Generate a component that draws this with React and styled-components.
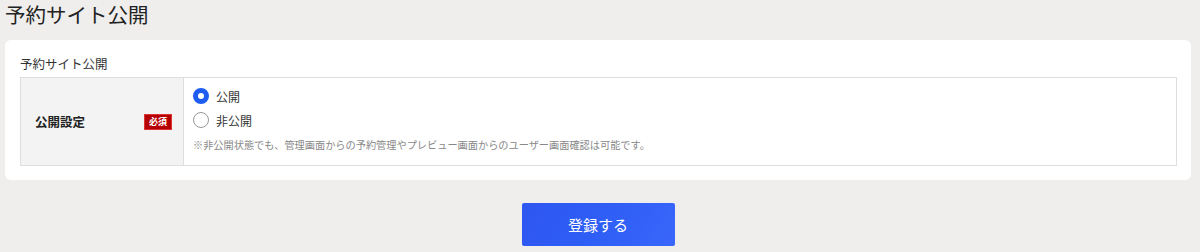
import React from "react";
import styled, { createGlobalStyle } from "styled-components";

const Global = createGlobalStyle`
  html, body { margin: 0; padding: 0; background: #efeeec; }
  body { font-family: "Noto Sans CJK JP", "Noto Sans", sans-serif; color: #333; }
`;

const Page = styled.div`
  padding: 0 9px 0 5px;
`;

const Title = styled.h1`
  margin: 0;
  font-size: 20.5px;
  font-weight: 400;
  line-height: 28px;
  color: #222;
`;

const Card = styled.section`
  margin-top: 12px;
  background: #fff;
  border-radius: 6px;
  padding: 14px 14px 14px 15px;
`;

const SectionLabel = styled.div`
  font-size: 12.5px;
  line-height: 20px;
  color: #333;
  margin-bottom: 3px;
`;

const Table = styled.div`
  display: grid;
  grid-template-columns: 163px 1fr;
  border: 1px solid #dedede;
`;

const HeadCell = styled.div`
  background: #f3f3f3;
  border-right: 1px solid #dedede;
  display: flex;
  align-items: center;
  justify-content: space-between;
  padding: 0 11px 0 14px;
`;

const HeadText = styled.span`
  font-size: 12.5px;
  font-weight: 700;
  color: #222;
`;

const Badge = styled.span`
  background: #b40000;
  color: #fff;
  font-size: 9px;
  font-weight: 700;
  line-height: 14px;
  padding: 0 4px;
  border: 1px solid #d33;
`;

const Body = styled.div`
  padding: 6px 10px 12px 9px;
  display: flex;
  flex-direction: column;
`;

const RadioRow = styled.label`
  display: flex;
  align-items: center;
  gap: 7px;
  height: 24px;
  font-size: 12px;
  color: #333;
`;

const Radio = styled.span`
  width: 16px;
  height: 16px;
  box-sizing: border-box;
  border-radius: 50%;
  border: ${(p) => (p.$checked ? "5px solid #1f5cf0" : "1.5px solid #9a9a9a")};
  background: #fff;
`;

const Note = styled.p`
  margin: 5px 0 0;
  font-size: 10.2px;
  line-height: 16px;
  color: #888;
`;

const Actions = styled.div`
  display: flex;
  justify-content: center;
  margin-top: 23px;
`;

const Button = styled.button`
  width: 153px;
  height: 43px;
  border: none;
  border-radius: 2px;
  background: linear-gradient(120deg, #2e56f0 0%, #2e5ef5 50%, #3a66fb 100%);
  color: #fff;
  font-family: inherit;
  font-size: 15px;
  cursor: pointer;
`;

export default function App() {
  return (
    <>
      <Global />
      <Page>
        <Title>予約サイト公開</Title>
        <Card>
          <SectionLabel>予約サイト公開</SectionLabel>
          <Table>
            <HeadCell>
              <HeadText>公開設定</HeadText>
              <Badge>必須</Badge>
            </HeadCell>
            <Body>
              <RadioRow>
                <Radio $checked />
                公開
              </RadioRow>
              <RadioRow>
                <Radio />
                非公開
              </RadioRow>
              <Note>※非公開状態でも、管理画面からの予約管理やプレビュー画面からのユーザー画面確認は可能です。</Note>
            </Body>
          </Table>
        </Card>
        <Actions>
          <Button>登録する</Button>
        </Actions>
      </Page>
    </>
  );
}
